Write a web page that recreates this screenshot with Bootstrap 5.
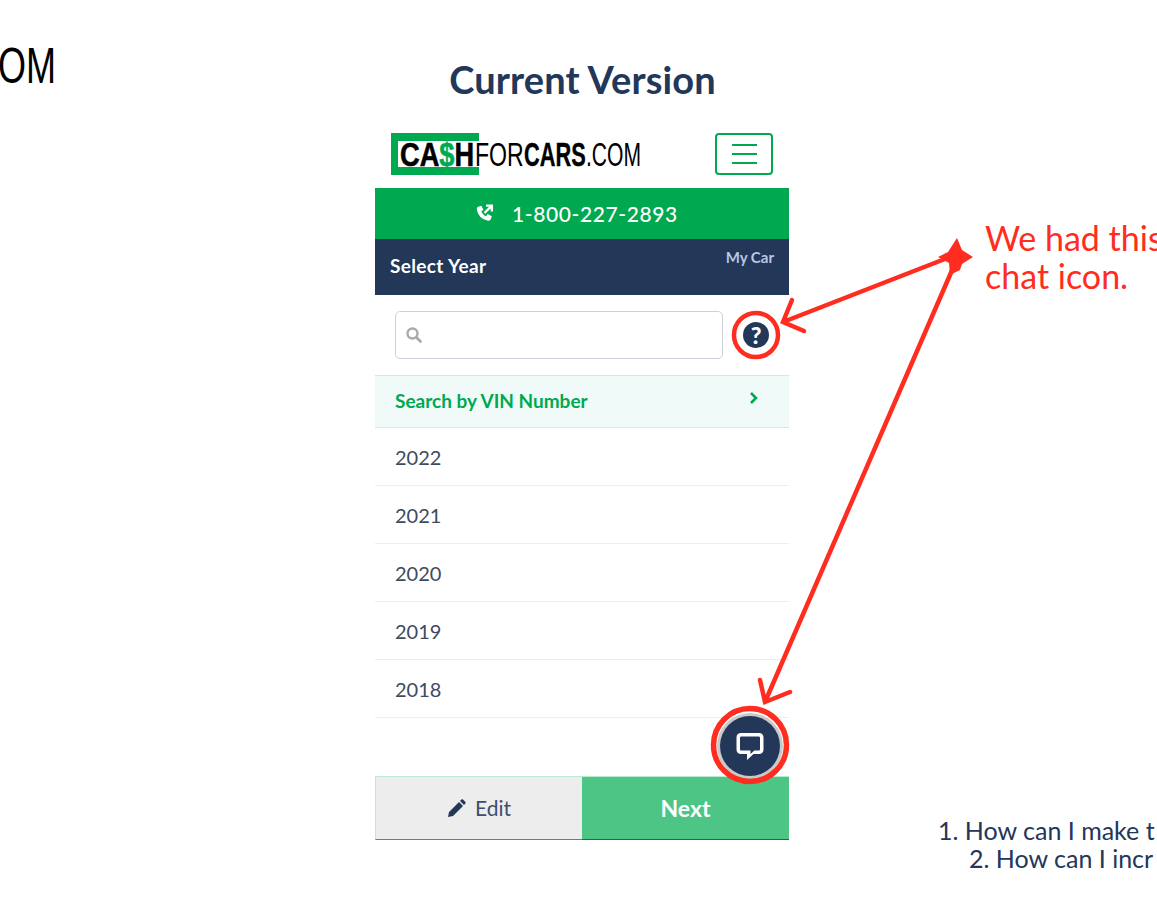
<!DOCTYPE html>
<html lang="en">
<head>
    <meta charset="UTF-8">
    <meta name="viewport" content="width=device-width, initial-scale=1.0">
    <title>Current Version</title>
    <link href="https://cdn.jsdelivr.net/npm/bootstrap@5.3.0/dist/css/bootstrap.min.css" rel="stylesheet">
    <style>
        html, body { height: 905px; overflow: hidden; }
        body { background: #fff; position: relative; font-family: "Lato", "Noto Sans", sans-serif; color: #22375a; }
        .page-title { font-family: "Lato", sans-serif; font-size: 38px; font-weight: 700; color: #22375a; text-align: center; margin: 0; padding: 58px 0 0 8px; line-height: 43px; height: 120px; letter-spacing: 0.1px; }
        .phone { width: 414px; margin-left: 375px; position: relative; }
        .phone-head { height: 68px; padding: 13px 16px 13px 16px; }
        .site-logo { font-family: "Liberation Sans", sans-serif; font-size: 34px; line-height: 42px; color: #000; white-space: nowrap; display: flex; }
        .logo-part { display: block; transform-origin: left center; }
        .logo-cash { background: #00a94f; height: 42px; width: 88px; padding: 8px 0 8px 7px; display: block; margin-right: -4px; }
        .logo-bill { background: #fff; display: block; height: 26px; padding-left: 2px; }
        .logo-bill span { display: block; font-weight: 700; line-height: 26px; transform: scaleX(0.8); transform-origin: left center; -webkit-text-stroke: 0.6px #000; }
        .logo-bill i { color: #00a94f; font-style: normal; -webkit-text-stroke: 0.6px #00a94f; }
        .logo-for { width: 49px; transform: scaleX(0.68); }
        .logo-cars { width: 62px; font-weight: 700; transform: scaleX(0.64); -webkit-text-stroke: 0.4px #000; }
        .logo-com { width: 55px; transform: scaleX(0.62); }
        .menu-btn { width: 58px; height: 42px; border: 2px solid #00a94f; border-radius: 4px; padding: 0; background: #fff; display: flex; flex-direction: column; align-items: center; justify-content: center; gap: 7px; }
        .menu-btn span { width: 25px; height: 2px; background: #00a94f; display: block; }
        .call-bar { height: 51px; background: #00a94f; color: #fff; font-size: 21px; font-weight: 500; letter-spacing: 0.6px; gap: 17px; padding-right: 12px; }
        .step-bar { height: 56px; background: #233759; color: #fff; padding: 9px 15px 0; }
        .step-name { font-size: 19px; font-weight: 700; letter-spacing: 0.35px; margin-top: 4px; }
        .step-link { font-size: 15px; font-weight: 700; color: #b9c7e2; line-height: 18px; }
        .search-row { height: 80px; padding: 16px 10px 16px 20px; gap: 20px; }
        .search-box { width: 328px; height: 48px; border: 1px solid #cfd0dc; border-radius: 5px; padding: 0 9px; }
        .help-dot { width: 26px; height: 26px; border-radius: 50%; background: #233759; color: #fff; font-size: 23px; font-weight: 900; line-height: 26px; text-align: center; }
        .vin-row { height: 53px; background: #f0faf8; border-top: 1px solid #dfe3e8; border-bottom: 1px solid #dfe3e8; padding: 0 30px 0 20px; color: #00a94f; font-size: 19px; font-weight: 700; }
        .year-list .list-group-item { height: 58px; padding: 0 20px; display: flex; align-items: center; font-size: 20px; color: #3e4b5e; border-color: #eee; }
        .year-list .list-group-item:last-child { border-bottom: 1px solid #eee; }
        .list-space { height: 58px; }
        .foot-btns { height: 64px; border-top: 1px solid #b9ecd3; }
        .foot-btn { flex: 1 1 50%; border-radius: 0; border: 0; font-size: 21px; height: 63px; display: flex; align-items: center; justify-content: center; gap: 9px; }
        .foot-edit { background: #ededed; color: #3c4f6d; border-bottom: 1px solid #777; border-left: 1px solid #b9ecd3; }
        .foot-next { background: #4dc585; color: #fff; font-size: 23px; font-weight: 700; border-bottom: 1px solid #1f6b45; }
        .chat-dot { position: absolute; left: 345px; bottom: 64px; width: 60px; height: 60px; border-radius: 50%; background: #233759; box-shadow: 0 0 0 3px #c9c9c9; display: flex; align-items: center; justify-content: center; }
        .draw-layer { position: absolute; left: 0; top: 0; pointer-events: none; }
        .note-red { position: absolute; left: 985px; top: 219px; width: 172px; overflow: hidden; color: #ff2d20; font-size: 34px; line-height: 38px; white-space: nowrap; }
        .note-tl { position: absolute; left: -2px; top: 36px; font-family: "Liberation Sans", sans-serif; font-size: 50px; line-height: 60px; color: #000; transform: scaleX(0.72); transform-origin: left center; }
        .note-q { position: absolute; top: 816px; left: 938px; width: 219px; overflow: hidden; color: #22375a; font-size: 25px; line-height: 28px; white-space: nowrap; }
        .note-q div + div { padding-left: 31px; }
    </style>
</head>
<body>
<div class="note-tl">OM</div>
<h1 class="page-title">Current Version</h1>

<div class="phone">
    <div class="phone-head d-flex justify-content-between">
        <div class="site-logo">
            <span class="logo-cash"><span class="logo-bill"><span>CA<i>$</i>H</span></span></span>
            <span class="logo-part logo-for">FOR</span>
            <span class="logo-part logo-cars">CARS</span>
            <span class="logo-part logo-com">.COM</span>
        </div>
        <button class="menu-btn" type="button"><span></span><span></span><span></span></button>
    </div>
    <div class="call-bar d-flex align-items-center justify-content-center">
        <svg width="21" height="21" viewBox="0 0 20 20"><path fill="#fff" d="M4 3.500 7 2.500 9 6.500 7 8c.8 2 2.500 3.700 4.500 4.500l1.500-2 4 2-1 3c-.4 1-1.500 1.500-2.500 1.300C7.500 15.800 3.700 12 2.700 6c-.2-1 .3-2 1.300-2.500z"/><path fill="none" stroke="#fff" stroke-width="2.200" d="M10 9.500 16.500 3M11.500 2.500h5.500V8"/></svg>
        <span>1-800-227-2893</span>
    </div>
    <div class="step-bar d-flex justify-content-between align-items-start">
        <div class="step-name">Select Year</div>
        <div class="step-link">My Car</div>
    </div>
    <div class="search-row d-flex align-items-center">
        <div class="search-box d-flex align-items-center">
            <svg width="18" height="18" viewBox="0 0 18 18"><circle cx="7.500" cy="7.500" r="5" fill="none" stroke="#aaa" stroke-width="2.400"/><path stroke="#aaa" stroke-width="2.800" stroke-linecap="round" d="M11.500 11.500 15.500 15.500"/></svg>
        </div>
        <div class="help-dot">?</div>
    </div>
    <div class="vin-row d-flex align-items-center justify-content-between">
        <span>Search by VIN Number</span>
        <svg class="mb-2" width="10" height="14" viewBox="0 0 10 14"><path fill="none" stroke="#00a94f" stroke-width="2.600" d="M2 2 7 7 2 12"/></svg>
    </div>
    <ul class="list-group list-group-flush year-list">
        <li class="list-group-item">2022</li>
        <li class="list-group-item">2021</li>
        <li class="list-group-item">2020</li>
        <li class="list-group-item">2019</li>
        <li class="list-group-item">2018</li>
    </ul>
    <div class="list-space"></div>
    <div class="foot-btns d-flex">
        <button class="btn foot-btn foot-edit" type="button">
            <svg width="19" height="19" viewBox="0 0 19 19"><path fill="#233759" d="M1 18l1-5L12 3l4 4L6 17zM13 2l1.200-1.200c.6-.6 1.400-.6 2 0l2 2c.6.6.6 1.400 0 2L17 6z"/></svg>
            <span>Edit</span>
        </button>
        <button class="btn foot-btn foot-next" type="button">Next</button>
    </div>
    <div class="chat-dot">
        <svg width="32" height="32" viewBox="0 0 32 32"><path fill="#fff" fill-rule="evenodd" d="M7 3h18c2.800 0 4.500 1.700 4.500 4.500v12c0 2.800-1.700 4.500-4.500 4.500h-5.500l-6.500 6v-6H7c-2.800 0-4.500-1.700-4.500-4.500v-12C2.500 4.700 4.200 3 7 3zM7.500 6.500c-1 0-1.500.5-1.500 1.500v11c0 1 .5 1.500 1.500 1.500h9V24l3.800-3.500h4.200c1 0 1.500-.5 1.500-1.500V8c0-1-.5-1.500-1.500-1.500z"/></svg>
    </div>
</div>

<svg class="draw-layer" width="1157" height="905" viewBox="0 0 1157 905">
    <g fill="none" stroke="#ff2d20" stroke-linecap="round">
        <circle cx="756" cy="335" r="22" stroke-width="4.500"/>
        <circle cx="750" cy="745" r="36.500" stroke-width="5.500"/>
        <path stroke-width="4.500" d="M950 257 783 322M792 300 783 322 804 331"/>
        <path stroke-width="4.500" d="M953 268 765 702M760 680 765 702 790 692"/>
    </g>
    <path fill="#ff2d20" d="M957 238 962 250 973 257 962 264 960 270 950 275 949 263 938 257 948 252z"/>
</svg>

<div class="note-red">We had this<br>chat icon.</div>
<div class="note-q"><div>1. How can I make t</div><div>2. How can I incr</div></div>

<script src="https://cdn.jsdelivr.net/npm/bootstrap@5.3.0/dist/js/bootstrap.bundle.min.js"></script>
</body>
</html>
